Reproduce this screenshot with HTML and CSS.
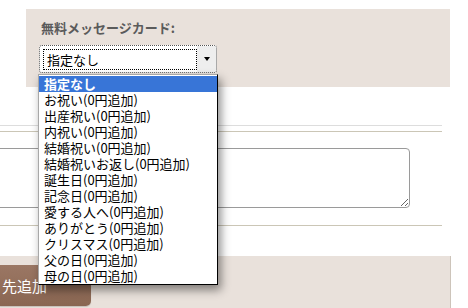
FILE: index.html
```html
<!DOCTYPE html>
<html lang="ja">
<head>
<meta charset="utf-8">
<link rel="stylesheet" href="styles.css">
</head>
<body>
<div class="page">
  <section class="card-panel">
    <div class="card-label">無料メッセージカード:</div>
    <div class="select">
      <div class="select-value">指定なし</div>
      <div class="select-arrow"><span class="tri"></span></div>
    </div>
  </section>
  <ul class="dropdown">
    <li class="opt selected">指定なし</li>
    <li class="opt">お祝い(0円追加)</li>
    <li class="opt">出産祝い(0円追加)</li>
    <li class="opt">内祝い(0円追加)</li>
    <li class="opt">結婚祝い(0円追加)</li>
    <li class="opt">結婚祝いお返し(0円追加)</li>
    <li class="opt">誕生日(0円追加)</li>
    <li class="opt">記念日(0円追加)</li>
    <li class="opt">愛する人へ(0円追加)</li>
    <li class="opt">ありがとう(0円追加)</li>
    <li class="opt">クリスマス(0円追加)</li>
    <li class="opt">父の日(0円追加)</li>
    <li class="opt">母の日(0円追加)</li>
  </ul>
  <div class="rule rule-light"></div>
  <div class="rule rule-beige rule-gap"></div>
  <textarea class="message"></textarea>
  <div class="rule rule-beige rule-after"></div>
  <section class="bottom-panel">
    <div class="add-btn">先追加</div>
  </section>
</div>
</body>
</html>
```
FILE: styles.css
```css
html, body {
  margin: 0;
  padding: 0;
  background: #fff;
  overflow: hidden;
}
body {
  width: 468px;
  height: 308px;
  font-family: "Noto Sans CJK JP", "Liberation Sans", sans-serif;
  font-size: 13px;
  color: #000;
}
.page {
  position: relative;
  width: 468px;
  height: 308px;
  overflow: hidden;
  padding-top: 9px;
  box-sizing: border-box;
}
.card-panel {
  margin-left: 26px;
  width: 424px;
  height: 78px;
  background: #e9e1db;
  box-sizing: border-box;
  padding: 11px 0 0 13px;
}
.card-label {
  font-weight: bold;
  color: #5b5b5b;
  font-size: 13px;
  line-height: 16px;
  padding-left: 2px;
}
.select {
  margin-top: 9px;
  width: 178px;
  height: 28px;
  box-sizing: border-box;
  border: 1px dotted #555;
  border-radius: 3px;
  background: #fff;
  display: flex;
}
.select-value {
  flex: 1;
  margin: 3px 0 2px 3px;
  border: 1px dotted #000;
  padding-left: 3px;
  line-height: 19px;
  font-size: 13px;
}
.select-arrow {
  width: 19px;
  background: #eeeeee;
  display: flex;
  align-items: center;
  justify-content: center;
  border-radius: 0 2px 2px 0;
}
.tri {
  width: 0;
  height: 0;
  border-left: 3px solid transparent;
  border-right: 3px solid transparent;
  border-top: 4px solid #000;
}
.dropdown {
  position: absolute;
  left: 38px;
  top: 74px;
  width: 180px;
  margin: 0;
  padding: 1px 0 0;
  list-style: none;
  background: #fff;
  box-sizing: border-box;
  border: 1px solid #000;
  border-left-color: #a8a8a8;
  border-top-color: #a8a8a8;
  box-shadow: 3px 5px 9px rgba(0, 0, 0, 0.45);
  z-index: 5;
}
.opt {
  height: 16px;
  line-height: 16px;
  padding-left: 5px;
  white-space: nowrap;
  font-size: 13px;
}
.opt.selected {
  background: #3875d7;
  color: #fff;
  font-weight: bold;
}
.rule {
  width: 442px;
  height: 1px;
}
.rule-light {
  margin-top: 38px;
  background: #dddddd;
}
.rule-beige {
  background: #cbc6b6;
}
.rule-gap {
  margin-top: 5px;
}
.message {
  display: block;
  margin: 16px 0 0 -12px;
  width: 422px;
  height: 60px;
  box-sizing: border-box;
  border: 1px solid #9a9a9a;
  border-radius: 4px;
  background: #fff;
  resize: both;
  font-family: inherit;
}
.rule-after {
  margin-top: 17px;
}
.bottom-panel {
  margin-top: 30px;
  width: 451px;
  height: 60px;
  box-sizing: border-box;
  background: #e9e1db;
  border-right: 1px solid #cdc4ba;
  padding-top: 9px;
}
.add-btn {
  width: 91px;
  height: 41px;
  box-sizing: border-box;
  background: linear-gradient(#9b7764, #8a6652);
  border-radius: 0 5px 5px 0;
  color: #fff;
  font-size: 15px;
  line-height: 41px;
  padding-left: 2px;
  box-shadow: 0 1px 1px rgba(0, 0, 0, 0.15);
}
```
